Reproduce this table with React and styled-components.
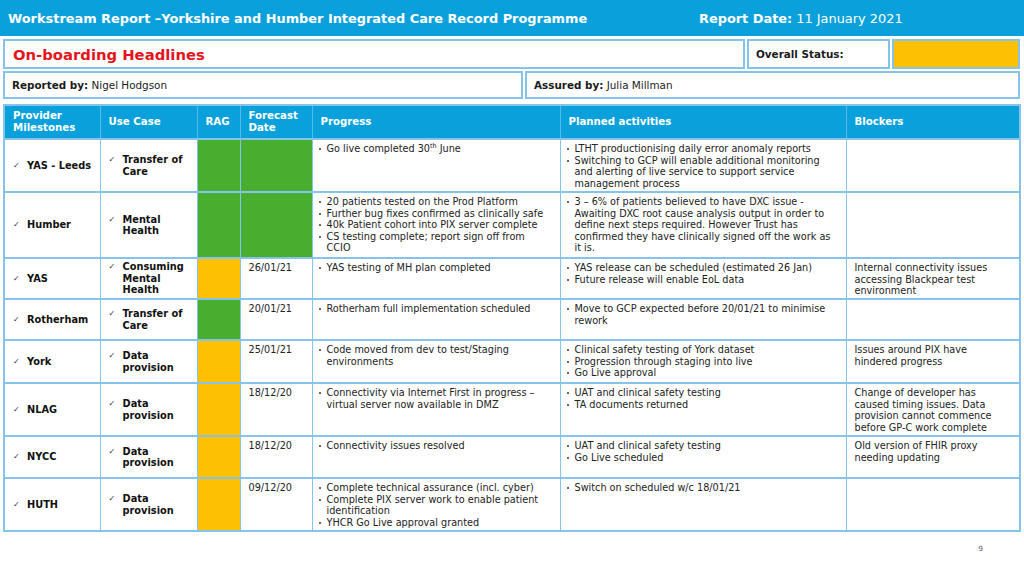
import React from 'react';
import styled, { createGlobalStyle } from 'styled-components';

const GlobalStyle = createGlobalStyle`
  html, body {
    margin: 0;
    padding: 0;
    background: #ffffff;
  }
  body {
    font-family: "DejaVu Sans", Verdana, sans-serif;
    color: #1a1a1a;
  }
`;

const Page = styled.div`
  width: 1024px;
  height: 576px;
  display: flex;
  flex-direction: column;
  overflow: hidden;
  background: #ffffff;
`;

const TopBar = styled.div`
  height: 36px;
  background: #0aa0dc;
  display: flex;
  align-items: center;
  padding-left: 8px;
  color: #ffffff;
  font-size: 12.9px;
`;

const Title = styled.div`
  font-weight: bold;
  width: 691px;
`;

const ReportDate = styled.div`
  b {
    font-weight: bold;
  }
`;

const InfoRow = styled.div`
  display: flex;
  gap: 2px;
  padding: 0 4px 0 3px;
  margin-top: ${p => p.$top}px;
  height: ${p => p.$height}px;
`;

const InfoBox = styled.div`
  box-sizing: border-box;
  border: 2px solid #86c3eb;
  background: ${p => p.$fill || '#ffffff'};
  width: ${p => (p.$width ? `${p.$width}px` : 'auto')};
  flex: ${p => (p.$width ? 'none' : 1)};
  display: flex;
  align-items: center;
  padding-left: 7px;
  font-size: 10.4px;
  b {
    font-weight: bold;
  }
`;

const Headline = styled.div`
  color: #e5141b;
  font-weight: bold;
  font-size: 14.8px;
  padding-left: 1px;
`;

const Table = styled.table`
  margin: 5px 0 0 3px;
  width: 1016px;
  table-layout: fixed;
  border-collapse: collapse;
  border: 2px solid #86c3eb;
  font-size: 9.7px;
  line-height: 11.5px;
`;

const HeadCell = styled.th`
  background: #0aa0dc;
  color: #ffffff;
  font-weight: bold;
  font-size: 10.2px;
  line-height: 12.5px;
  text-align: left;
  vertical-align: middle;
  padding: 0 6px 0 8px;
  height: 32px;
  border-left: 1px solid #5ab8e6;
  border-bottom: 2px solid #86c3eb;
`;

const Row = styled.tr`
  height: ${p => p.$height}px;
`;

const Cell = styled.td`
  border: 1px solid #86c3eb;
  border-width: 1px 1px 2px 1px;
  padding: ${p => (p.$middle ? '0 4px 0 8px' : '3px 9px 0 5px')};
  vertical-align: ${p => (p.$middle ? 'middle' : 'top')};
  background: ${p => p.$fill || '#ffffff'};
  color: #222222;
`;

const DateText = styled.div`
  padding-left: 3px;
`;

const Ticked = styled.div`
  display: flex;
  align-items: flex-start;
  font-weight: bold;
  font-size: 9.8px;
  line-height: 11.5px;
  color: #111111;
`;

const Tick = styled.span`
  font-weight: normal;
  font-size: 8px;
  width: 14px;
  flex: none;
  color: #333333;
`;

const Bullets = styled.ul`
  margin: 0;
  padding: 0;
  list-style: none;
`;

const Bullet = styled.li`
  position: relative;
  padding-left: 9px;
  &::before {
    content: '';
    position: absolute;
    left: 1px;
    top: 5px;
    width: 2.4px;
    height: 2.4px;
    border-radius: 50%;
    background: #333333;
  }
  sup {
    font-size: 6.5px;
    line-height: 0;
  }
`;

const Blocker = styled.div`
  padding-left: 3px;
`;

const Footer = styled.div`
  flex: 1;
  display: flex;
  justify-content: flex-end;
  padding: 13px 41px 0 0;
  font-size: 7px;
  color: #555555;
`;

const GREEN = '#47ae2f';
const AMBER = '#fdc002';

const rows = [
  {
    provider: 'YAS - Leeds',
    useCase: 'Transfer of Care',
    rag: GREEN,
    date: null,
    height: 53,
    progress: [<>Go live completed 30<sup>th</sup> June</>],
    planned: [
      'LTHT productionising daily error anomaly reports',
      'Switching to GCP will enable additional monitoring and alerting of live service to support service management process',
    ],
    blocker: '',
  },
  {
    provider: 'Humber',
    useCase: 'Mental Health',
    rag: GREEN,
    date: null,
    height: 66,
    progress: [
      '20 patients tested on the Prod Platform',
      'Further bug fixes confirmed as clinically safe',
      '40k Patient cohort into PIX server complete',
      'CS testing complete; report sign off from CCIO',
    ],
    planned: [
      '3 – 6% of patients believed to have DXC issue - Awaiting DXC root cause analysis output in order to define next steps required. However Trust has confirmed they have clinically signed off the work as it is.',
    ],
    blocker: '',
  },
  {
    provider: 'YAS',
    useCase: 'Consuming Mental Health',
    rag: AMBER,
    date: '26/01/21',
    height: 41,
    progress: ['YAS testing of MH plan completed'],
    planned: ['YAS release can be scheduled (estimated 26 Jan)', 'Future release will enable EoL data'],
    blocker: 'Internal connectivity issues accessing Blackpear test environment',
  },
  {
    provider: 'Rotherham',
    useCase: 'Transfer of Care',
    rag: GREEN,
    date: '20/01/21',
    height: 41,
    progress: ['Rotherham full implementation scheduled'],
    planned: ['Move to GCP expected before 20/01/21 to minimise rework'],
    blocker: '',
  },
  {
    provider: 'York',
    useCase: 'Data provision',
    rag: AMBER,
    date: '25/01/21',
    height: 43,
    progress: ['Code moved from dev to test/Staging environments'],
    planned: [
      'Clinical safety testing of York dataset',
      'Progression through staging into live',
      'Go Live approval',
    ],
    blocker: 'Issues around PIX have hindered progress',
  },
  {
    provider: 'NLAG',
    useCase: 'Data provision',
    rag: AMBER,
    date: '18/12/20',
    height: 53,
    progress: ['Connectivity via Internet First in progress – virtual server now available in DMZ'],
    planned: ['UAT and clinical safety testing', 'TA documents returned'],
    blocker: 'Change of developer has caused timing issues. Data provision cannot commence before GP-C work complete',
  },
  {
    provider: 'NYCC',
    useCase: 'Data provision',
    rag: AMBER,
    date: '18/12/20',
    height: 42,
    progress: ['Connectivity issues resolved'],
    planned: ['UAT and clinical safety testing', 'Go Live scheduled'],
    blocker: 'Old version of FHIR proxy needing updating',
  },
  {
    provider: 'HUTH',
    useCase: 'Data provision',
    rag: AMBER,
    date: '09/12/20',
    height: 53,
    progress: [
      'Complete technical assurance (incl. cyber)',
      'Complete PIX server work to enable patient identification',
      'YHCR Go Live approval granted',
    ],
    planned: ['Switch on scheduled w/c 18/01/21'],
    blocker: '',
  },
];

const columns = [
  { label: <>Provider<br />Milestones</>, width: 96 },
  { label: 'Use Case', width: 97 },
  { label: 'RAG', width: 43 },
  { label: <>Forecast<br />Date</>, width: 72 },
  { label: 'Progress', width: 248 },
  { label: 'Planned activities', width: 286 },
  { label: 'Blockers', width: 174 },
];

const BulletList = ({ items }) => (
  <Bullets>
    {items.map((item, i) => (
      <Bullet key={i}>{item}</Bullet>
    ))}
  </Bullets>
);

export default function App() {
  return (
    <Page>
      <GlobalStyle />
      <TopBar>
        <Title>Workstream Report –Yorkshire and Humber Integrated Care Record Programme</Title>
        <ReportDate>
          <b>Report Date:</b> 11 January 2021
        </ReportDate>
      </TopBar>

      <InfoRow $top={3} $height={30}>
        <InfoBox>
          <Headline>On-boarding Headlines</Headline>
        </InfoBox>
        <InfoBox $width={143}>
          <b>Overall Status:</b>
        </InfoBox>
        <InfoBox $width={128} $fill={AMBER} />
      </InfoRow>

      <InfoRow $top={2} $height={28}>
        <InfoBox $width={520}>
          <span>
            <b>Reported by:</b> Nigel Hodgson
          </span>
        </InfoBox>
        <InfoBox>
          <span>
            <b>Assured by:</b> Julia Millman
          </span>
        </InfoBox>
      </InfoRow>

      <Table>
        <colgroup>
          {columns.map((c, i) => (
            <col key={i} style={{ width: c.width }} />
          ))}
        </colgroup>
        <thead>
          <tr>
            {columns.map((c, i) => (
              <HeadCell key={i}>{c.label}</HeadCell>
            ))}
          </tr>
        </thead>
        <tbody>
          {rows.map((r, i) => (
            <Row key={i} $height={r.height}>
              <Cell $middle>
                <Ticked>
                  <Tick>✓</Tick>
                  <span>{r.provider}</span>
                </Ticked>
              </Cell>
              <Cell $middle>
                <Ticked>
                  <Tick>✓</Tick>
                  <span>{r.useCase}</span>
                </Ticked>
              </Cell>
              <Cell $fill={r.rag} />
              <Cell $fill={r.date ? undefined : r.rag}>
                {r.date && <DateText>{r.date}</DateText>}
              </Cell>
              <Cell>
                <BulletList items={r.progress} />
              </Cell>
              <Cell>
                <BulletList items={r.planned} />
              </Cell>
              <Cell>
                <Blocker>{r.blocker}</Blocker>
              </Cell>
            </Row>
          ))}
        </tbody>
      </Table>

      <Footer>9</Footer>
    </Page>
  );
}
